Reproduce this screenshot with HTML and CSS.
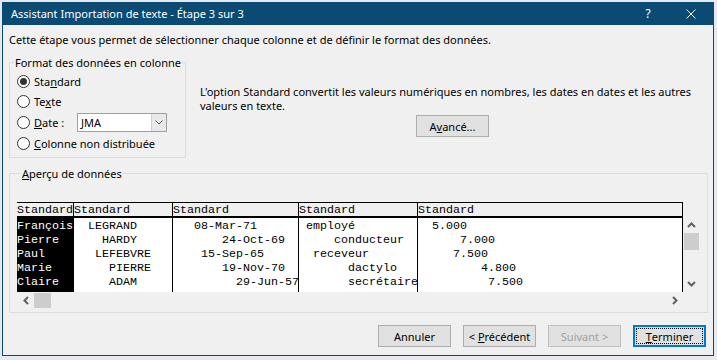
FILE: index.html
```html
<!DOCTYPE html>
<html lang="fr">
  <head>
    <meta charset="UTF-8" />
    <title>Assistant Importation de texte - Étape 3 sur 3</title>
    <link rel="stylesheet" href="styles.css">
  </head>
  <body>
    <div class="window">
      <div class="titlebar">
        <span class="title">Assistant Importation de texte - Étape 3 sur 3</span>
        <span class="help">?</span>
        <span class="close">
          <svg width="10" height="10" viewBox="0 0 10 10">
            <path d="M0.5 0.5 L9.5 9.5 M9.5 0.5 L0.5 9.5" stroke="#fff" stroke-width="1" fill="none" />
          </svg>
        </span>
      </div>

      <div class="content">
        <p class="intro">Cette étape vous permet de sélectionner chaque colonne et de définir le format des données.</p>

        <div class="top">
          <fieldset class="group format">
            <legend>Format des données en colonne</legend>
            <label class="radio-row">
              <span class="radio checked"></span>
              <span>Sta<u>n</u>dard</span>
            </label>
            <label class="radio-row">
              <span class="radio"></span>
              <span>Te<u>x</u>te</span>
            </label>
            <label class="radio-row date-row">
              <span class="radio"></span>
              <span class="date-label"><u>D</u>ate :</span>
              <span class="select">
                <span class="select-value">JMA</span>
                <span class="select-arrow">
                  <svg width="8" height="5" viewBox="0 0 8 5">
                    <path d="M0.5 0.5 L4 4 L7.5 0.5" stroke="#555" stroke-width="1" fill="none" />
                  </svg>
                </span>
              </span>
            </label>
            <label class="radio-row">
              <span class="radio"></span>
              <span><u>C</u>olonne non distribuée</span>
            </label>
          </fieldset>

          <div class="desc">
            <p>L'option Standard convertit les valeurs numériques en nombres, les dates en dates et les autres<br>valeurs en texte.</p>
            <button class="btn advanced">A<u>v</u>ancé...</button>
          </div>
        </div>

        <fieldset class="group preview">
          <legend><u>A</u>perçu de données</legend>
          <div class="grid-wrap">
            <div class="grid">
              <div class="col first">
                <div class="head">Standard</div>
                <div class="cells">François
Pierre
Paul
Marie
Claire</div>
              </div>
              <div class="col w2">
                <div class="head">Standard</div>
                <div class="cells">  LEGRAND
    HARDY
   LEFEBVRE
     PIERRE
     ADAM</div>
              </div>
              <div class="col w3">
                <div class="head">Standard</div>
                <div class="cells">   08-Mar-71
       24-Oct-69
    15-Sep-65
       19-Nov-70
         29-Jun-57</div>
              </div>
              <div class="col w4">
                <div class="head">Standard</div>
                <div class="cells"> employé
     conducteur
  receveur
       dactylo
       secrétaire</div>
              </div>
              <div class="col last">
                <div class="head">Standard</div>
                <div class="cells">  5.000
      7.000
     7.500
         4.800
          7.500</div>
              </div>
            </div>
            <div class="vscroll">
              <span class="arrow">
                <svg width="9" height="6" viewBox="0 0 9 6"><path d="M1 5 L4.5 1.5 L8 5" stroke="#606060" stroke-width="2" fill="none" /></svg>
              </span>
              <span class="thumb"></span>
              <span class="arrow down">
                <svg width="9" height="6" viewBox="0 0 9 6"><path d="M1 1 L4.5 4.5 L8 1" stroke="#606060" stroke-width="2" fill="none" /></svg>
              </span>
            </div>
          </div>
          <div class="hscroll">
            <span class="arrow">
              <svg width="6" height="9" viewBox="0 0 6 9"><path d="M5 1 L1.5 4.5 L5 8" stroke="#606060" stroke-width="2" fill="none" /></svg>
            </span>
            <span class="thumb"></span>
            <span class="arrow right">
              <svg width="6" height="9" viewBox="0 0 6 9"><path d="M1 1 L4.5 4.5 L1 8" stroke="#606060" stroke-width="2" fill="none" /></svg>
            </span>
          </div>
        </fieldset>

        <div class="buttons">
          <button class="btn">Annuler</button>
          <button class="btn">&lt; <u>P</u>récédent</button>
          <button class="btn" disabled>Suivant &gt;</button>
          <button class="btn default"><span class="focus"><u>T</u>erminer</span></button>
        </div>
      </div>
    </div>
  </body>
</html>
```

FILE: styles.css
```css
body {
  margin: 0;
  background: #e4eaf0;
  font-family: "Noto Sans", "Open Sans", sans-serif;
  font-size: 11px;
  color: #000;
}

.window {
  margin: 2px 0 0 2px;
  width: 712px;
  height: 354px;
  box-sizing: border-box;
  border: 1px solid #0a4a73;
  border-top: none;
  background: #f0f0f0;
  overflow: hidden;
}

.titlebar {
  height: 23px;
  margin: 0 -1px;
  background: #0a4a73;
  color: #fff;
  display: flex;
  align-items: center;
  padding-left: 9px;
}

.title {
  flex: 1;
}

.help {
  width: 12px;
  text-align: center;
  font-size: 12px;
  margin-right: 32px;
}

.close {
  display: flex;
  margin-right: 18px;
}

.content {
  padding: 0 0 0 6px;
}

.intro {
  margin: 0;
  padding-top: 7px;
  line-height: 16px;
}

.top {
  display: flex;
  margin-top: 7px;
}

.group {
  margin: 0;
  padding: 0;
  border: 1px solid #dcdcdc;
  min-width: 0;
}

.group legend {
  margin-left: 4px;
  padding: 0 1px;
  line-height: 15px;
  white-space: nowrap;
}

u {
  text-decoration-thickness: 1px;
  text-underline-offset: 1px;
}

.format {
  width: 177px;
  box-sizing: border-box;
  padding: 1px 0 4px 0;
}

.radio-row {
  display: flex;
  align-items: center;
  gap: 4px;
  height: 20px;
  margin-left: 7px;
}

.date-row {
  height: 22px;
}

.radio {
  width: 13px;
  height: 13px;
  box-sizing: border-box;
  border: 1px solid #333;
  border-radius: 50%;
  background: #fff;
  display: flex;
  align-items: center;
  justify-content: center;
}

.radio.checked::after {
  content: "";
  width: 7px;
  height: 7px;
  border-radius: 50%;
  background: #333;
}

.date-label {
  width: 39px;
}

.select {
  width: 90px;
  height: 19px;
  box-sizing: border-box;
  border: 1px solid #a0a0a0;
  background: #fff;
  display: flex;
}

.select-value {
  flex: 1;
  padding-left: 3px;
  line-height: 17px;
}

.select-arrow {
  width: 14px;
  background: #e9e9e9;
  border-left: 1px solid #cfcfcf;
  display: flex;
  align-items: center;
  justify-content: center;
}

.desc {
  margin-left: 14px;
  padding-top: 30px;
}

.desc p {
  margin: 0;
  line-height: 14px;
  white-space: nowrap;
}

.btn {
  font-family: inherit;
  font-size: 11px;
  color: #000;
  background: #e1e1e1;
  border: 1px solid #adadad;
  box-sizing: border-box;
  height: 22px;
  width: 73px;
  padding: 0;
}

.advanced {
  display: block;
  margin: 2px 0 0 216px;
}

.preview {
  width: 699px;
  box-sizing: border-box;
  margin-top: 8px;
  padding: 21px 0 3px 7px;
}

.grid-wrap {
  display: flex;
}

.grid {
  display: flex;
  width: 666px;
  border-top: 1px solid #000;
  font-family: "Liberation Mono", "Courier New", monospace;
  font-size: 11.67px;
}

.col {
  border-right: 1px solid #000;
  width: 98px;
}

.col.first {
  width: 56px;
}

.col.w3 {
  width: 125px;
}

.col.w4 {
  width: 118px;
}

.col.last {
  flex: 1;
}

.head {
  height: 13px;
  line-height: 14px;
  border-bottom: 2px solid #000;
  background: #f0f0f0;
  white-space: pre;
  overflow: hidden;
}

.cells {
  height: 74px;
  box-sizing: border-box;
  padding-top: 1px;
  line-height: 14px;
  white-space: pre;
  overflow: hidden;
  background: #fff;
}

.first .cells {
  background: #000;
  color: #fff;
}

.vscroll {
  width: 17px;
  margin-top: 14px;
  display: flex;
  flex-direction: column;
}

.vscroll .arrow {
  height: 17px;
  display: flex;
  align-items: center;
  justify-content: center;
}

.vscroll .thumb {
  height: 17px;
  background: #cdcdcd;
  margin: 0 1px;
}

.vscroll .down {
  margin-top: auto;
}

.hscroll {
  width: 666px;
  height: 17px;
  display: flex;
}

.hscroll .arrow {
  width: 17px;
  display: flex;
  align-items: center;
  justify-content: center;
}

.hscroll .thumb {
  width: 17px;
  background: #cdcdcd;
  margin: 1px 0;
}

.hscroll .right {
  margin-left: auto;
}

.buttons {
  display: flex;
  justify-content: flex-end;
  gap: 12px;
  margin-top: 12px;
  padding-right: 7px;
}

.btn:disabled {
  color: #a0a0a0;
  background: #e1e1e1;
  border-color: #bfbfbf;
}

.btn.default {
  border: 2px solid #0078d7;
  display: flex;
  align-items: center;
  justify-content: center;
  padding: 1px;
}

.focus {
  flex: 1;
  align-self: stretch;
  border: 1px dotted #000;
  display: flex;
  align-items: center;
  justify-content: center;
}
```
